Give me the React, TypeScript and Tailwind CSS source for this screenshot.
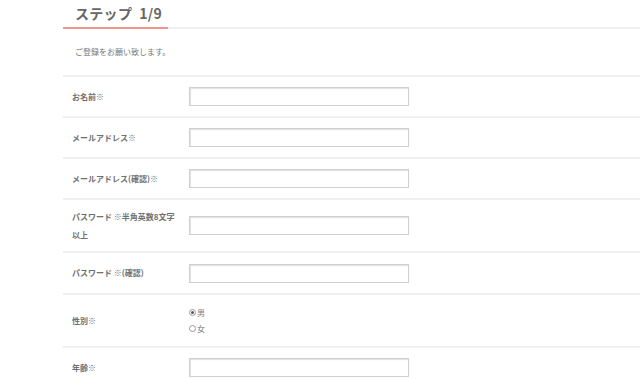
const font = { fontFamily: '"Noto Sans CJK JP", "Noto Sans", sans-serif' };

const rows = [
  { label: "お名前※", h: "h-[41px]" },
  { label: "メールアドレス※", h: "h-[41px]" },
  { label: "メールアドレス(確認)※", h: "h-[41px]" },
  { label: "パスワード ※半角英数8文字以上", h: "h-[53px]" },
  { label: "パスワード ※(確認)", h: "h-[42px]" },
];

function TextRow({ label, h }: { label: string; h: string }) {
  return (
    <div className={`flex items-center border-b-2 border-[#f0f0f0] ${h}`}>
      <div className="w-[127px] shrink-0 pl-[9px] pr-[12px] text-[8px] font-semibold leading-[18px] text-[#707070]">
        {label}
      </div>
      <input
        type="text"
        className="h-[19px] w-[220px] -ml-px border border-[#cfcfcf] bg-white shadow-[inset_1px_1px_1px_rgba(0,0,0,0.12)] outline-none"
      />
    </div>
  );
}

export default function App() {
  return (
    <div className="h-[379px] w-[640px] overflow-hidden bg-white pl-[63px]" style={font}>
      {/* Step heading */}
      <div className="border-b-2 border-[#f0f0f0]">
        <div className="-mb-[2px] inline-block w-[105px] whitespace-nowrap border-b-2 border-[#f19494] pl-[12px] pt-[4px] pb-[5px] text-[14px] font-semibold leading-[17px] tracking-[0.3px] text-[#666]">
          ステップ&nbsp;&nbsp;1/9
        </div>
      </div>

      <div className="flex h-[48px] items-center border-b-2 border-[#f0f0f0] pl-[12px] text-[8px] text-[#777]">
        ご登録をお願い致します。
      </div>

      {rows.map((r) => (
        <TextRow key={r.label} label={r.label} h={r.h} />
      ))}

      {/* Gender */}
      <div className="flex h-[53px] items-center border-b-2 border-[#f0f0f0]">
        <div className="w-[127px] shrink-0 pl-[9px] text-[8px] font-semibold text-[#707070]">性別※</div>
        <div className="-ml-px flex flex-col text-[8px] leading-[16px] text-[#777]">
          <label className="flex items-center gap-[1px]">
            <span className="flex h-[7px] w-[7px] items-center justify-center rounded-full border border-[#999]">
              <span className="h-[3px] w-[3px] rounded-full bg-[#555]" />
            </span>
            男
          </label>
          <label className="flex items-center gap-[1px]">
            <span className="h-[7px] w-[7px] rounded-full border border-[#999]" />
            女
          </label>
        </div>
      </div>

      <TextRow label="年齢※" h="h-[41px]" />
    </div>
  );
}
